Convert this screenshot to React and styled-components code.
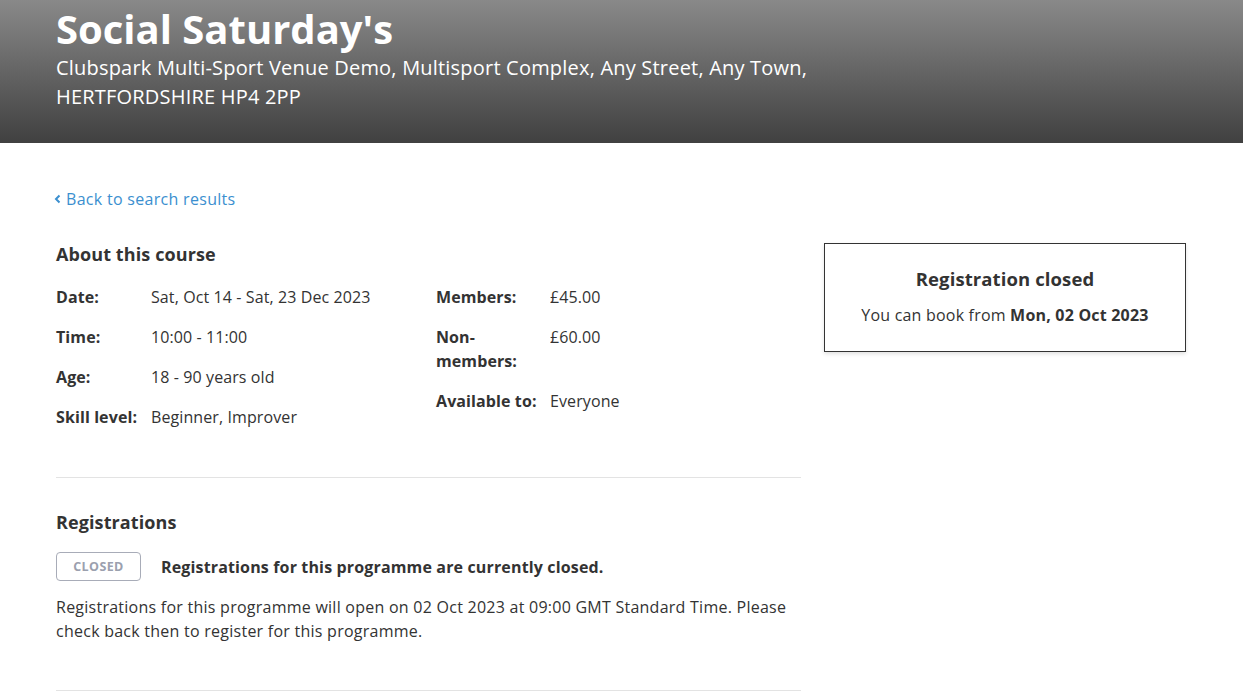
import React from "react";
import styled, { createGlobalStyle } from "styled-components";

const GlobalStyle = createGlobalStyle`
  body {
    margin: 0;
    background: #fff;
    font-family: "Open Sans", "Noto Sans", sans-serif;
    color: #333;
    letter-spacing: 0.1px;
  }
  * { box-sizing: border-box; }
`;

const Hero = styled.header`
  height: 143px;
  padding: 5px 56px 0 56px;
  background: linear-gradient(to bottom, #898989 0%, #404040 100%);
  color: #fff;
`;

const Title = styled.h1`
  margin: 0;
  font-size: 40px;
  line-height: 48px;
  font-weight: 700;
  letter-spacing: 0;
`;

const Address = styled.p`
  margin: 0;
  max-width: 790px;
  font-size: 20px;
  line-height: 29px;
  font-weight: 400;
  letter-spacing: 0.2px;
`;

const Main = styled.main`
  display: flex;
  align-items: flex-start;
  gap: 23px;
  padding: 44px 57px 0 56px;
`;

const Left = styled.div`
  width: 745px;
`;

const BackLink = styled.a`
  display: inline-flex;
  align-items: center;
  gap: 4px;
  color: #3b8fcf;
  font-size: 16px;
  line-height: 20px;
  letter-spacing: 0.3px;
  text-decoration: none;
  margin-left: -2px;
`;

const SectionTitle = styled.h2`
  margin: ${p => p.$top || "0"} 0 0 0;
  font-size: 18px;
  line-height: 24px;
  font-weight: 700;
`;

const Facts = styled.div`
  display: grid;
  grid-template-columns: 380px 1fr;
  margin-top: 19px;
  padding-bottom: 48px;
  border-bottom: 1px solid #e3e3e3;
`;

const FactList = styled.dl`
  margin: 0;
  display: flex;
  flex-direction: column;
  gap: 16px;
  font-size: 16px;
  line-height: 24px;
`;

const Fact = styled.div`
  display: grid;
  grid-template-columns: ${p => p.$label} 1fr;
  align-items: start;
`;

const Label = styled.dt`
  margin: 0;
  font-weight: 700;
  width: ${p => (p.$narrow ? "80px" : "auto")};
`;

const Value = styled.dd`
  margin: 0;
  height: 24px;
  overflow: hidden;
  white-space: nowrap;
`;

const Registrations = styled.section`
  padding: 32px 0 47px;
  border-bottom: 1px solid #e3e3e3;
`;

const StatusRow = styled.div`
  display: flex;
  align-items: center;
  gap: 20px;
  margin-top: 18px;
`;

const Badge = styled.span`
  display: inline-flex;
  align-items: center;
  justify-content: center;
  width: 85px;
  height: 29px;
  border: 1px solid #a8acb8;
  border-radius: 4px;
  color: #9ba0ae;
  font-size: 12.5px;
  font-weight: 700;
  letter-spacing: 0.4px;
`;

const StatusText = styled.strong`
  font-size: 16px;
  font-weight: 700;
  letter-spacing: 0.15px;
`;

const Paragraph = styled.p`
  margin: 14px 0 0;
  font-size: 16px;
  line-height: 24px;
  letter-spacing: 0.25px;
`;

const Card = styled.aside`
  margin-top: 56px;
  width: 362px;
  height: 109px;
  border: 1px solid #333;
  box-shadow: 0 2px 4px rgba(0, 0, 0, 0.12);
  display: flex;
  flex-direction: column;
  align-items: center;
  padding-top: 23px;
  gap: 12px;
`;

const CardTitle = styled.h3`
  margin: 0;
  font-size: 18.5px;
  line-height: 24px;
  font-weight: 700;
`;

const CardText = styled.p`
  margin: 0;
  font-size: 16px;
  line-height: 24px;
  letter-spacing: 0.2px;
  b { font-weight: 700; }
`;

const Chevron = () => (
  <svg width="8" height="10" viewBox="0 0 8 10" aria-hidden="true">
    <path d="M5.5 1.5 L2 5 L5.5 8.5" fill="none" stroke="currentColor" strokeWidth="2" />
  </svg>
);

const left = [
  ["Date:", "Sat, Oct 14 - Sat, 23 Dec 2023"],
  ["Time:", "10:00 - 11:00"],
  ["Age:", "18 - 90 years old"],
  ["Skill level:", "Beginner, Improver"]
];

const right = [
  ["Members:", "£45.00"],
  ["Non-members:", "£60.00", true],
  ["Available to:", "Everyone"]
];

const FactColumn = ({ items, label }) => (
  <FactList>
    {items.map(([k, v, narrow]) => (
      <Fact key={k} $label={label}>
        <Label $narrow={narrow}>{k}</Label>
        <Value>{v}</Value>
      </Fact>
    ))}
  </FactList>
);

const App = () => (
  <>
    <GlobalStyle />
    <Hero>
      <Title>Social Saturday's</Title>
      <Address>
        Clubspark Multi-Sport Venue Demo, Multisport Complex, Any Street, Any Town,
        HERTFORDSHIRE HP4 2PP
      </Address>
    </Hero>
    <Main>
      <Left>
        <BackLink href="#">
          <Chevron />
          Back to search results
        </BackLink>
        <SectionTitle $top="33px">About this course</SectionTitle>
        <Facts>
          <FactColumn items={left} label="95px" />
          <FactColumn items={right} label="114px" />
        </Facts>
        <Registrations>
          <SectionTitle>Registrations</SectionTitle>
          <StatusRow>
            <Badge>CLOSED</Badge>
            <StatusText>Registrations for this programme are currently closed.</StatusText>
          </StatusRow>
          <Paragraph>
            Registrations for this programme will open on 02 Oct 2023 at 09:00 GMT Standard Time. Please
            check back then to register for this programme.
          </Paragraph>
        </Registrations>
      </Left>
      <Card>
        <CardTitle>Registration closed</CardTitle>
        <CardText>
          You can book from <b>Mon, 02 Oct 2023</b>
        </CardText>
      </Card>
    </Main>
  </>
);

export default App;
